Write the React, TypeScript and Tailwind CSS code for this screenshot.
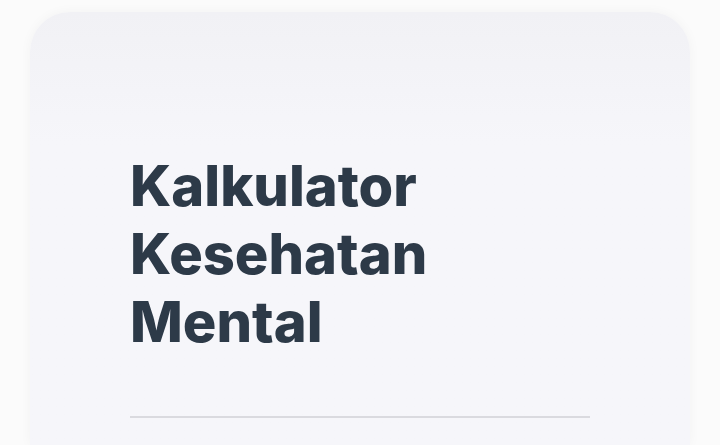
export default function App() {
  return (
    <div className="h-[445px] w-[720px] overflow-hidden bg-[#fbfbfb] px-[30px] pt-[12px]">
      <div className="h-full rounded-t-[40px] bg-gradient-to-b from-[#f1f1f5] to-[#f6f6fa] to-[30%] pl-[100px] pr-[100px] pt-[140px] shadow-[0_0_12px_rgba(0,0,0,0.04)]">
        <h1 className="font-['Inter',sans-serif] text-[56px] font-extrabold leading-[68px] tracking-normal text-[#2d3a48]">
          Kalkulator
          <br />
          Kesehatan
          <br />
          Mental
        </h1>
        <div className="mt-[60px] h-[2px] bg-[#dadadf]" />
      </div>
    </div>
  );
}
